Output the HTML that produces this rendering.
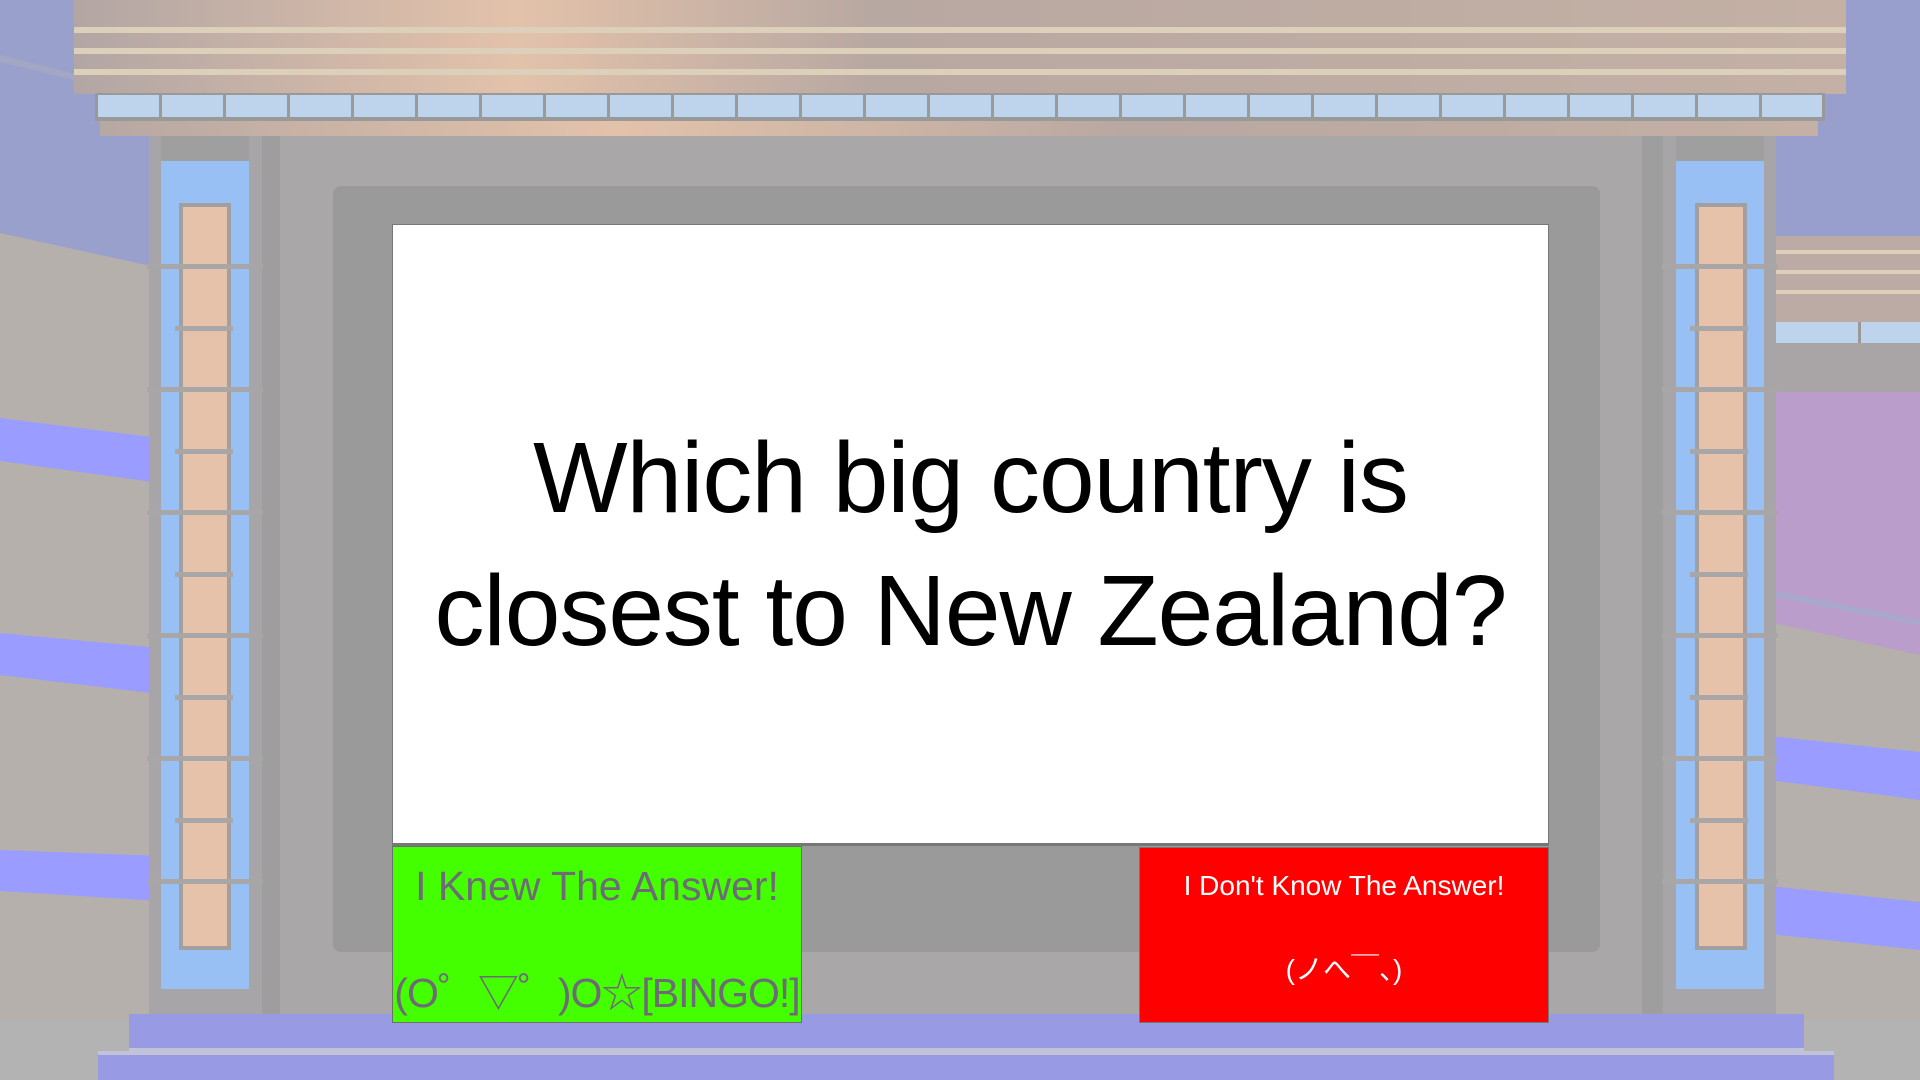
<!DOCTYPE html>
<html><head><meta charset="utf-8"><style>
*{margin:0;padding:0;box-sizing:border-box}
body{width:1920px;height:1080px;overflow:hidden;position:relative;background:#b3b3b3;font-family:"Liberation Sans","Noto Sans CJK JP",sans-serif}
.a{position:absolute}
</style></head><body>
<svg class="a" style="left:0;top:0" width="1920" height="1080">
<rect x="0" y="0" width="160" height="1020" fill="#9aa0cc"/>
<polygon points="0,233 160,268 160,1020 0,1020" fill="#b5b0ac"/>
<polygon points="0,55 160,95 160,100 0,62" fill="#a4a7c4"/>
<polygon points="0,418 160,438 160,483 0,461" fill="#9a9cff"/>
<polygon points="0,633 160,648 160,694 0,675" fill="#9a9cff"/>
<polygon points="0,850 160,856 160,901 0,891" fill="#9a9cff"/>
<rect x="1770" y="0" width="150" height="1020" fill="#989fcc"/>
<rect x="1770" y="236" width="150" height="88" fill="#bcaba4"/>
<rect x="1770" y="250" width="150" height="4" fill="#ddd0bb"/>
<rect x="1770" y="270" width="150" height="4" fill="#ddd0bb"/>
<rect x="1770" y="290" width="150" height="4" fill="#ddd0bb"/>
<rect x="1770" y="322" width="150" height="21" fill="#bed4ec"/>
<rect x="1858" y="322" width="3" height="21" fill="#999"/>
<rect x="1770" y="343" width="150" height="50" fill="#a9a5a6"/>
<polygon points="1770,392 1920,392 1920,655 1770,622" fill="#bb9dcc"/>
<polygon points="1770,622 1920,655 1920,1020 1770,1020" fill="#b5b0ac"/>
<polygon points="1770,590 1920,620 1920,625 1770,596" fill="#a7a9cc"/>
<polygon points="1770,736 1920,752 1920,800 1770,780" fill="#9a9cff"/>
<polygon points="1770,886 1920,902 1920,950 1770,934" fill="#9a9cff"/>
</svg>
<div class="a" style="top:130px;left:262px;width:1400px;height:890px;background:#aaa7a8"></div>
<div class="a" style="left:262px;top:130px;width:18px;height:890px;background:#9e9e9e"></div>
<div class="a" style="left:1642px;top:130px;width:22px;height:890px;background:#9e9e9e"></div>
<div class="a" style="left:333px;top:186px;width:1267px;height:766px;background:#9a9a9a;border-radius:8px"></div>
<div class="a" style="left:149px;top:136px;width:113px;height:880px;background:#a7a5a8"></div>
<div class="a" style="left:161px;top:161px;width:88px;height:828px;background:#99c0f5"></div>
<div class="a" style="left:161px;top:136px;width:88px;height:25px;background:#9f9f9f"></div>
<div class="a" style="left:179px;top:203px;width:52px;height:747px;background:#e6c2aa;border:4px solid #a19f9f"></div>
<div class="a" style="left:1663px;top:136px;width:113px;height:880px;background:#a7a5a8"></div>
<div class="a" style="left:1676px;top:161px;width:88px;height:828px;background:#99c0f5"></div>
<div class="a" style="left:1676px;top:136px;width:88px;height:25px;background:#9f9f9f"></div>
<div class="a" style="left:1695px;top:203px;width:52px;height:747px;background:#e6c2aa;border:4px solid #a19f9f"></div>
<svg class="a" style="left:0;top:0" width="1920" height="1080">
<g fill="#a9a6a8">
<rect x="147" y="264" width="116" height="5"/><rect x="175" y="326" width="58" height="5"/>
<rect x="147" y="387" width="116" height="5"/><rect x="175" y="449" width="58" height="5"/>
<rect x="147" y="510" width="116" height="5"/><rect x="175" y="572" width="58" height="5"/>
<rect x="147" y="633" width="116" height="5"/><rect x="175" y="695" width="58" height="5"/>
<rect x="147" y="756" width="116" height="5"/><rect x="175" y="818" width="58" height="5"/>
<rect x="147" y="879" width="116" height="5"/>
<rect x="1662" y="264" width="116" height="5"/><rect x="1690" y="326" width="58" height="5"/>
<rect x="1662" y="387" width="116" height="5"/><rect x="1690" y="449" width="58" height="5"/>
<rect x="1662" y="510" width="116" height="5"/><rect x="1690" y="572" width="58" height="5"/>
<rect x="1662" y="633" width="116" height="5"/><rect x="1690" y="695" width="58" height="5"/>
<rect x="1662" y="756" width="116" height="5"/><rect x="1690" y="818" width="58" height="5"/>
<rect x="1662" y="879" width="116" height="5"/>
</g></svg>
<div class="a" style="left:74px;top:0;width:1772px;height:94px;background:linear-gradient(90deg,#b2a6a4 0%,#e3c2aa 25%,#b8a8a2 45%,#c4b0a4 100%)"></div>
<div class="a" style="left:74px;top:27px;width:1772px;height:6px;background:#ddd0bb"></div>
<div class="a" style="left:74px;top:48px;width:1772px;height:6px;background:#ddd0bb"></div>
<div class="a" style="left:74px;top:69px;width:1772px;height:6px;background:#ddd0bb"></div>
<div class="a" style="left:95px;top:93px;width:1730px;height:28px;background:#999"></div>
<div class="a" style="left:98px;top:95px;width:1724px;height:22px;background:repeating-linear-gradient(90deg,#bed4ec 0,#bed4ec 61px,#9a9a9a 61px,#9a9a9a 64px)"></div>
<div class="a" style="left:100px;top:121px;width:1718px;height:15px;background:linear-gradient(90deg,#b6a8a2,#e3c2aa 30%,#b8a8a2 60%,#c4b0a4)"></div>
<div class="a" style="left:129px;top:1014px;width:1675px;height:34px;background:#989ae4"></div>
<div class="a" style="left:129px;top:1048px;width:1675px;height:7px;background:#c2c2d8"></div>
<div class="a" style="left:98px;top:1051px;width:1736px;height:29px;background:#989ae4;border-top:4px solid #c2c2d8"></div>
<div class="a" style="left:392px;top:224px;width:1157px;height:622px;background:#fff;border:1px solid #777;border-bottom:3px solid #777"></div>
<div class="a" style="left:392px;top:412px;width:1157px;text-align:center;font-size:100px;line-height:133px;color:#000;letter-spacing:-1px">Which big country is<br>closest to New Zealand?</div>
<div class="a" style="left:392px;top:846px;width:410px;height:177px;background:#44ff00;border:1px solid #6e6e6e;color:#6e6a78;font-size:41px;text-align:center;white-space:nowrap">
<div style="position:absolute;left:0;right:0;top:16px">I Knew The Answer!</div>
<div style="position:absolute;left:-4px;right:-4px;top:112px;letter-spacing:-1px">(O゜▽゜)O☆[BINGO!]</div>
</div>
<div class="a" style="left:1139px;top:847px;width:410px;height:176px;background:#ff0000;border:1px solid #777;color:#fff;font-size:28px;text-align:center;white-space:nowrap">
<div style="position:absolute;left:0;right:0;top:22px">I Don't Know The Answer!</div>
<div style="position:absolute;left:0;right:0;top:100px">(ノへ￣、)</div>
</div>
</body></html>
